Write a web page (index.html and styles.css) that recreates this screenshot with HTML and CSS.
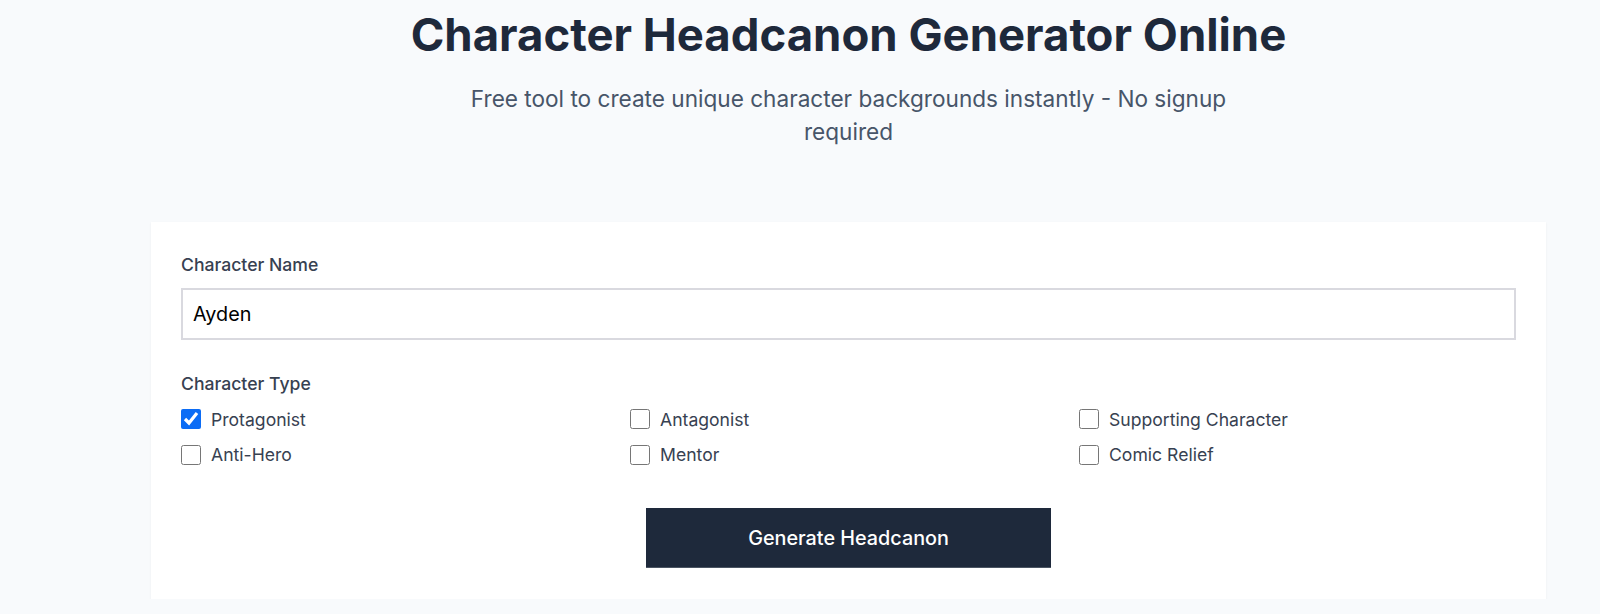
FILE: index.html
```html
<!DOCTYPE html>
<html lang="en">
<head>
<meta charset="utf-8">
<title>Character Headcanon Generator Online</title>
<link rel="stylesheet" href="styles.css">
</head>
<body>
<main class="page">
  <header class="hero">
    <h1 class="title">Character Headcanon Generator Online</h1>
    <p class="subtitle">Free tool to create unique character backgrounds instantly - No signup required</p>
  </header>
  <section class="card">
    <div class="field">
      <label class="label" for="name">Character Name</label>
      <input class="input" id="name" type="text" value="Ayden">
    </div>
    <div class="field types">
      <div class="label">Character Type</div>
      <div class="grid">
        <label class="opt"><input type="checkbox" checked><span>Protagonist</span></label>
        <label class="opt"><input type="checkbox"><span>Antagonist</span></label>
        <label class="opt"><input type="checkbox"><span>Supporting Character</span></label>
        <label class="opt"><input type="checkbox"><span>Anti-Hero</span></label>
        <label class="opt"><input type="checkbox"><span>Mentor</span></label>
        <label class="opt"><input type="checkbox"><span>Comic Relief</span></label>
      </div>
    </div>
    <div class="actions">
      <button class="btn" type="button">Generate Headcanon</button>
    </div>
  </section>
</main>
</body>
</html>
```
FILE: styles.css
```css
* { box-sizing: border-box; }
html, body { margin: 0; padding: 0; }
body {
  background: #f8fafc;
  font-family: Inter, "Noto Sans", sans-serif;
  color: #1e293b;
  overflow: hidden;
}
.page {
  width: 1395px;
  margin-left: 151px;
  padding-top: 10px;
}
.hero { text-align: center; }
.title {
  margin: 0;
  font-size: 45.5px;
  line-height: 50px;
  font-weight: 700;
  color: #1e293b;
}
.subtitle {
  max-width: 768px;
  margin: 22px auto 0;
  font-size: 22.6px;
  line-height: 33px;
  color: #475569;
}
.card {
  margin-top: 74px;
  background: #fff;
  padding: 30px 30px 31px;
  box-shadow: 0 1px 2px rgba(15, 23, 42, 0.06);
}
.label {
  display: block;
  font-size: 17.6px;
  line-height: 26px;
  font-weight: 500;
  color: #374151;
}
.input {
  display: block;
  width: 100%;
  height: 52px;
  margin-top: 10px;
  padding: 0 10px;
  border: 2px solid #d9d9df;
  font-family: Inter, "Noto Sans", sans-serif;
  font-size: 19.8px;
  color: #000;
  background: #fff;
  outline: none;
}
.types { margin-top: 31px; }
.grid {
  margin-top: 8px;
  display: grid;
  grid-template-columns: repeat(3, 1fr);
  column-gap: 12px;
  row-gap: 7.5px;
}
.opt {
  display: flex;
  align-items: center;
  gap: 10px;
  height: 28px;
  font-size: 17.6px;
  color: #374151;
}
.opt input {
  margin: 0;
  width: 20px;
  height: 20px;
  accent-color: #0b6cf5;
}
.actions {
  display: flex;
  justify-content: center;
  margin-top: 39.5px;
}
.btn {
  width: 405px;
  height: 60px;
  border: 0;
  border-bottom: 1px solid #4b5563;
  background: #1e293b;
  color: #fff;
  font-family: Inter, "Noto Sans", sans-serif;
  font-size: 19.8px;
  font-weight: 500;
}
```
